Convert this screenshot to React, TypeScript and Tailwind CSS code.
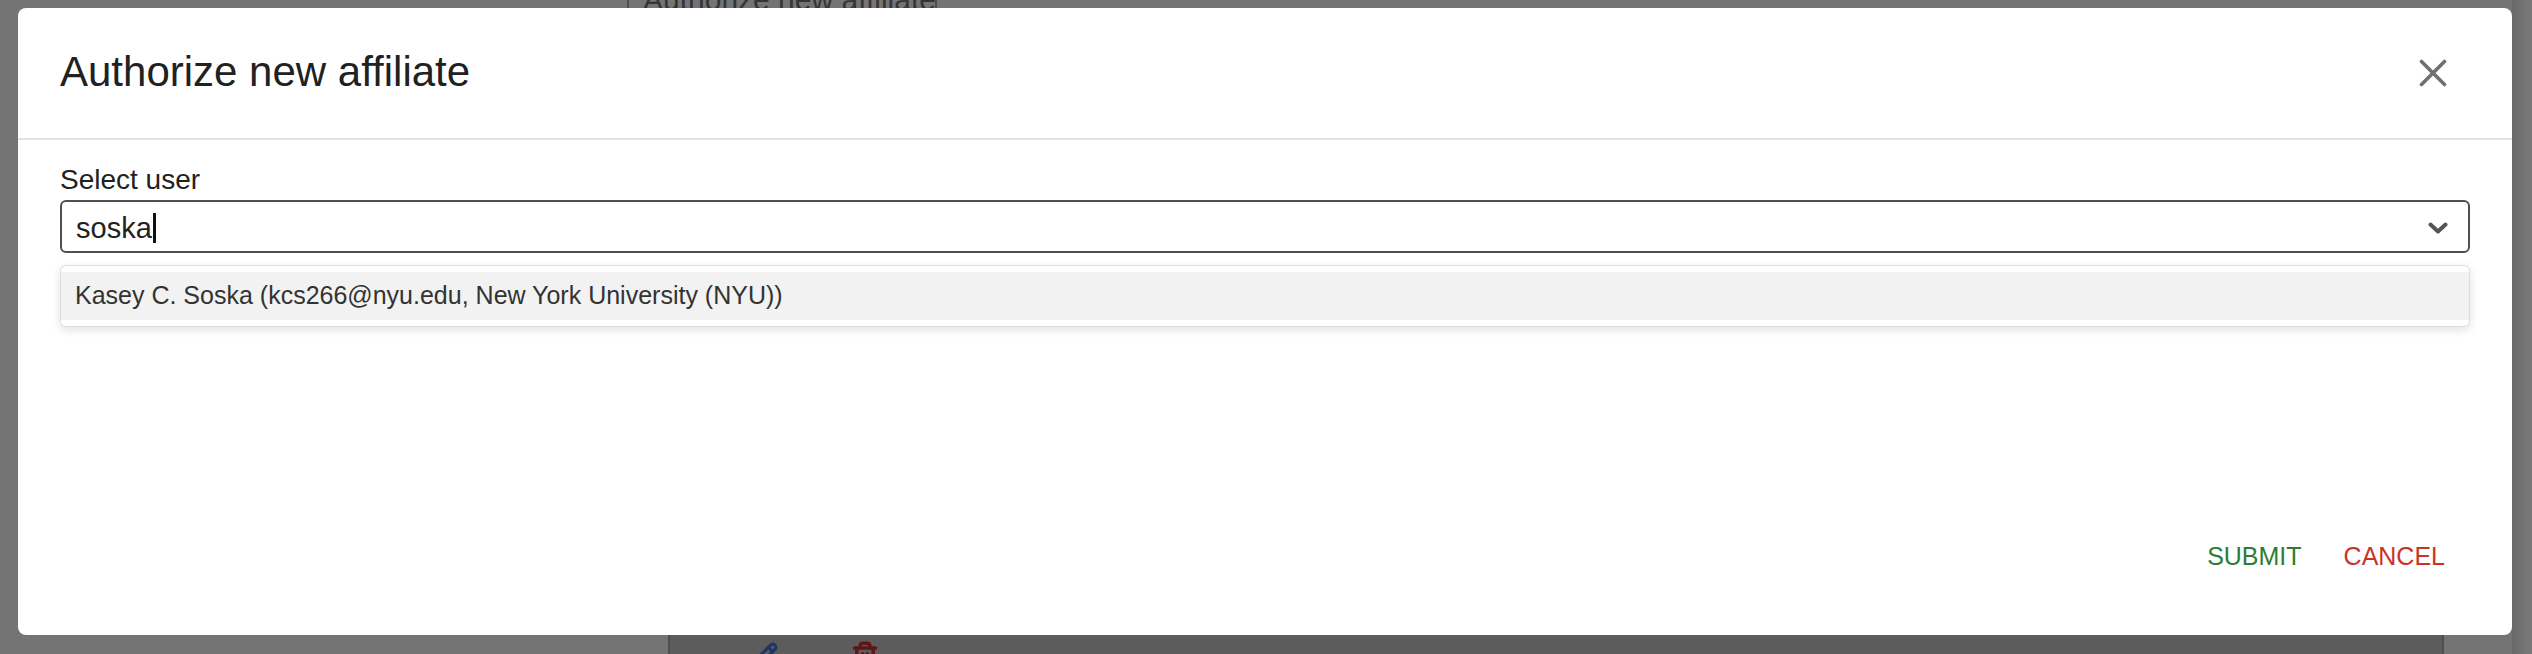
import React from "react";
import { Pencil, Trash2 } from "lucide-react";

const sans = "font-['Liberation_Sans',Arial,sans-serif]";

const Backdrop: React.FC = () => (
    <>
        {/* page content peeking out from behind the modal */}
        <div className="absolute left-[627px] top-[-20px] h-[40px] w-[310px] overflow-hidden whitespace-nowrap border-x-2 border-[#4f4f4f] px-[14px]">
            <span className={`${sans} text-[30px] leading-[40px] text-[#353535]`}>Authorize new affiliate</span>
        </div>
        <div className="absolute left-[668px] top-[635px] h-[19px] w-[1776px] border-x-2 border-[#4d4d4d] bg-[#5c5c5c]" />
        <Pencil className="absolute left-[752px] top-[642px] h-[26px] w-[26px] text-[#1c3766]" strokeWidth={3} />
        <Trash2 className="absolute left-[851px] top-[641px] h-[28px] w-[28px] text-[#5e1717]" strokeWidth={3} />
        <div className="absolute right-0 top-0 h-full w-[20px] bg-gradient-to-r from-[#6a6a6a] to-[#7a7a7a]" />
    </>
);

const App: React.FC = () => {
    return (
        <div className="relative h-[654px] w-[2532px] overflow-hidden bg-[#747474]">
            <Backdrop />

            <div className="absolute left-[18px] top-[8px] flex h-[627px] w-[2494px] flex-col rounded-[8px] bg-white">
                <header className="flex h-[132px] items-center justify-between border-b-2 border-[#e3e3e5] pl-[42px] pr-[65px]">
                    <h1 className={`${sans} pb-[2px] text-[42px] leading-none text-[#212121]`}>Authorize new affiliate</h1>
                    <button className="flex h-[28px] w-[28px] items-center justify-center text-[#707070]">
                        <svg viewBox="0 0 28 28" className="h-[28px] w-[28px]" fill="none" stroke="currentColor" strokeWidth={3.6} strokeLinecap="round">
                            <path d="M2.5 2.5L25.5 25.5M25.5 2.5L2.5 25.5" />
                        </svg>
                    </button>
                </header>

                <div className="flex flex-1 flex-col px-[42px] pt-[24px]">
                    <label className={`${sans} text-[28px] leading-[32px] text-[#212121]`}>Select user</label>
                    <div className="mt-[4px] flex h-[53px] items-center rounded-[6px] border-2 border-[#505050] pl-[14px] pr-[20px] pt-[3px]">
                        <span className={`${sans} text-[29px] leading-[32px] text-[#222]`}>soska</span>
                        <span className="ml-[1px] inline-block h-[30px] w-[3px] bg-[#111]" />
                        <div className="flex-1" />
                        <svg viewBox="0 0 20 12" className="h-[12px] w-[20px]" fill="none" stroke="#555" strokeWidth={4} strokeLinecap="round" strokeLinejoin="round">
                            <path d="M2.5 2.5L10 9.5L17.5 2.5" />
                        </svg>
                    </div>

                    <div className="mt-[12px] rounded-[6px] border border-[#dedede] bg-white py-[6px] shadow-[0_3px_10px_rgba(0,0,0,0.12)]">
                        <div className="flex h-[48px] items-center bg-[#f2f2f2] pl-[14px]">
                            <span className={`${sans} text-[25px] text-[#333]`}>Kasey C. Soska (kcs266@nyu.edu, New York University (NYU))</span>
                        </div>
                    </div>

                    <div className="flex-1" />

                    <div className="flex justify-end gap-[42px] pb-[64px] pr-[25px]">
                        <button className={`${sans} text-[25px] leading-[30px] text-[#2e7d32]`}>SUBMIT</button>
                        <button className={`${sans} text-[25px] leading-[30px] text-[#c9342a]`}>CANCEL</button>
                    </div>
                </div>
            </div>
        </div>
    );
};

export default App;
